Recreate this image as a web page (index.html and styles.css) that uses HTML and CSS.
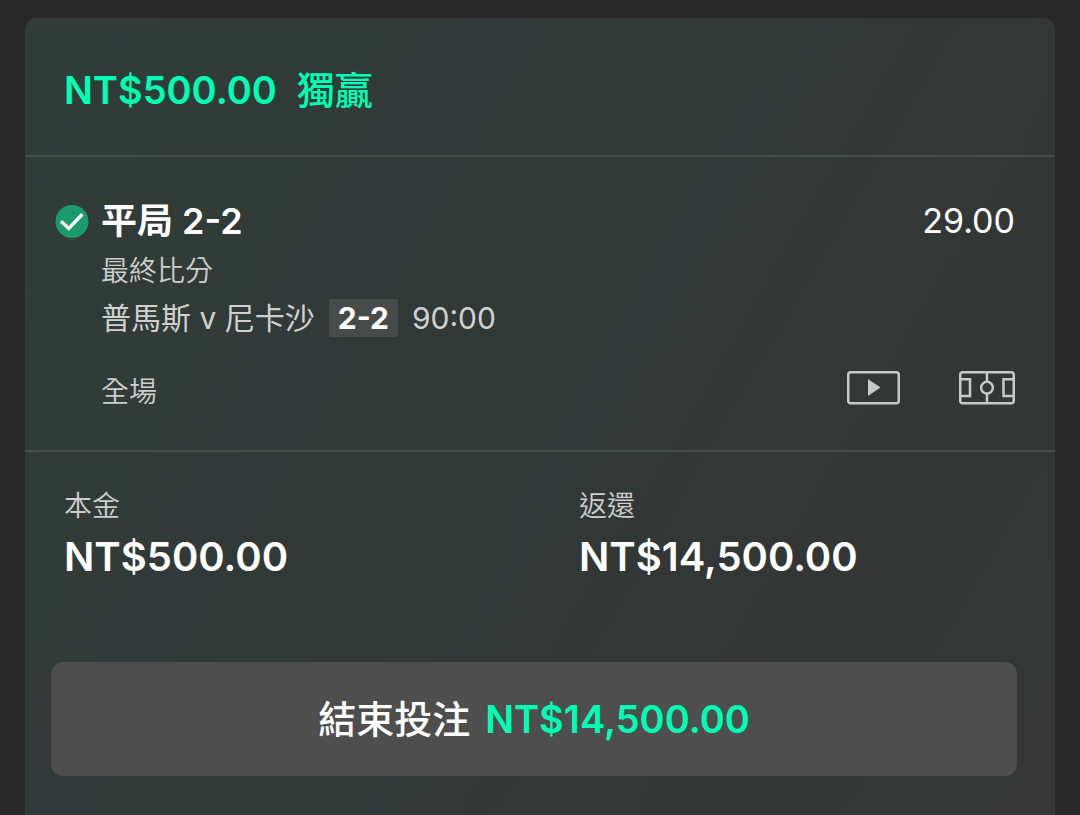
FILE: index.html
```html
<!DOCTYPE html>
<html lang="zh-Hant">
<head>
<meta charset="utf-8">
<meta name="viewport" content="width=device-width, initial-scale=1">
<title>獨贏</title>
<link rel="stylesheet" href="styles.css">
</head>
<body>
<main class="bet-card">
  <header class="bet-header">
    <span>NT$500.00</span>
    <span class="bet-type">獨贏</span>
  </header>
  <section class="selection">
    <svg class="won-icon" viewBox="0 0 34 34" aria-hidden="true">
      <circle cx="17" cy="16.5" r="16.5" fill="#1b9a6c"/>
      <path d="M6 16.300 13.800 23.400 27.300 9.300" fill="none" stroke="#fff" stroke-width="3.400"/>
    </svg>
    <div class="selection-body">
      <div class="selection-top">
        <h1 class="pick">平局 2-2</h1>
        <span class="odds">29.00</span>
      </div>
      <p class="market">最終比分</p>
      <p class="fixture">
        <span>普馬斯 v 尼卡沙</span>
        <span class="score">2-2</span>
        <span>90:00</span>
      </p>
      <div class="selection-foot">
        <span class="period">全場</span>
        <div class="actions">
          <button class="icon-button" type="button" aria-label="直播">
            <svg width="53" height="34" viewBox="0 0 53 34">
              <rect x="1.25" y="1.25" width="50.5" height="31" rx="2.500" fill="none" stroke="#c8c9c9" stroke-width="2.5"/>
              <path d="M21 8v17L33.500 16.500z" fill="#c8c9c9"/>
            </svg>
          </button>
          <button class="icon-button" type="button" aria-label="球場">
            <svg width="56" height="34" viewBox="0 0 56 34" fill="none" stroke="#c8c9c9" stroke-width="2.500">
              <rect x="1.25" y="1.25" width="53.5" height="31" rx="2.500"/>
              <path d="M28 1v9.700M28 22.700V33M1 8.300h10v16.800H1M55 8.300H44.500v16.800H55"/>
              <circle cx="28" cy="16.700" r="5.900"/>
            </svg>
          </button>
        </div>
      </div>
    </div>
  </section>
  <section class="totals">
    <dl class="total">
      <dt class="total-label">本金</dt>
      <dd class="total-value">NT$500.00</dd>
    </dl>
    <dl class="total">
      <dt class="total-label">返還</dt>
      <dd class="total-value">NT$14,500.00</dd>
    </dl>
  </section>
  <button class="cash-out" type="button">
    <span class="cash-out-label">結束投注</span>
    <span class="cash-out-value">NT$14,500.00</span>
  </button>
</main>
</body>
</html>
```

FILE: styles.css
```css
* {
  box-sizing: border-box;
}

body {
  margin: 0;
  min-height: 100vh;
  display: flex;
  flex-direction: column;
  padding: 18px 25px 0;
  background: #282828;
  color: #fff;
  font-family: Inter, "Noto Sans CJK TC", sans-serif;
}

h1, p, dl, dd {
  margin: 0;
}

button {
  border: 0;
  font: inherit;
  color: inherit;
  cursor: pointer;
}

.bet-card {
  flex: 1;
  display: flex;
  flex-direction: column;
  padding-bottom: 40px;
  border-radius: 12px 12px 0 0;
  background: linear-gradient(120deg, #303d39 0%, #313937 40%, #333635 75%, #363636 100%);
}

.bet-header {
  display: flex;
  gap: 20px;
  padding: 48px 39px 41px;
  border-bottom: 2px solid #474f4b;
  color: #00ffb4;
  font-size: 38px;
  font-weight: 600;
  line-height: 48px;
}

.bet-type,
.cash-out-label {
  font-weight: 500;
}

.selection {
  display: flex;
  gap: 12px;
  padding: 40px 40px 33px 30px;
  border-bottom: 2px solid #474f4b;
}

.won-icon {
  flex: none;
  width: 34px;
  height: 34px;
  margin-top: 8px;
}

.selection-body {
  flex: 1;
}

.selection-top,
.selection-foot {
  display: flex;
  justify-content: space-between;
}

.pick {
  font-size: 36px;
  font-weight: 600;
  line-height: 48px;
}

.odds {
  font-size: 34px;
  line-height: 48px;
}

.market,
.period,
.total-label {
  color: #cdcfce;
  font-size: 28px;
  font-weight: 350;
}

.market {
  line-height: 52px;
}

.fixture {
  display: flex;
  align-items: center;
  gap: 14px;
  color: #d0d2d1;
  font-size: 30px;
  line-height: 42px;
}

.score {
  padding: 0 9px;
  border-radius: 2px;
  background: #474c4a;
  color: #fff;
  font-size: 30px;
  font-weight: 700;
  line-height: 38px;
}

.selection-foot {
  margin-top: 28px;
}

.period {
  line-height: 50px;
}

.actions {
  display: flex;
  align-items: flex-start;
  gap: 59px;
  padding-top: 4px;
}

.icon-button {
  display: flex;
  padding: 0;
  background: none;
}

.totals {
  display: grid;
  grid-template-columns: 1fr 1fr;
  padding-top: 38px;
}

.total {
  padding-left: 39px;
}

.total-label {
  line-height: 32px;
}

.total-value {
  font-size: 40px;
  font-weight: 600;
  line-height: 70px;
}

.cash-out {
  display: flex;
  justify-content: center;
  align-items: center;
  gap: 15px;
  margin: 70px 38px 0 26px;
  padding: 32px 16px;
  border-radius: 12px;
  background: #4e4e4e;
  font-size: 38px;
  font-weight: 600;
  line-height: 50px;
}

.cash-out-value {
  color: #00ffb4;
}
```
